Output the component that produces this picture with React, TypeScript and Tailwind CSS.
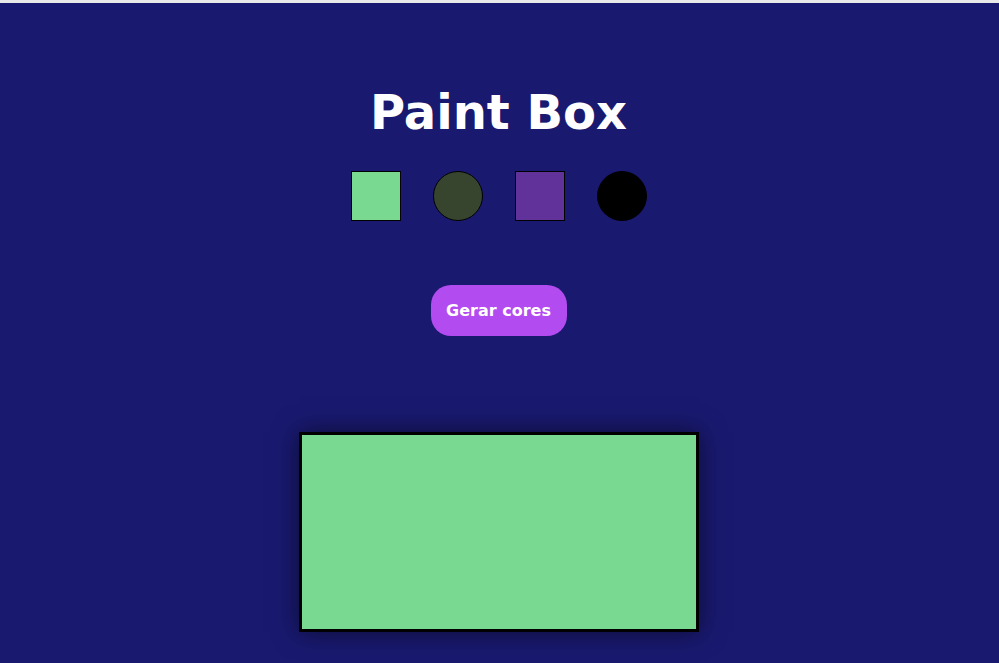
export default function App() {
  return (
    <div className="w-[999px] h-[663px] overflow-hidden flex flex-col bg-[#191970]" style={{ fontFamily: '"DejaVu Sans", sans-serif' }}>
      <div className="h-[3px] bg-[#e8e8e8] shrink-0" />
      <div className="flex-1 w-[997px] flex flex-col items-center">
        <h1 className="mt-[81px] text-[48px] leading-[56px] font-bold text-white">Paint Box</h1>
        <div className="mt-[31px] flex gap-[32px]">
          <div className="w-[50px] h-[50px] border border-black bg-[#7ad991]" />
          <div className="w-[50px] h-[50px] border border-black rounded-full bg-[#37452f]" />
          <div className="w-[50px] h-[50px] border border-black bg-[#61339a]" />
          <div className="w-[50px] h-[50px] border border-black rounded-full bg-black" />
        </div>
        <button className="mt-[64px] w-[136px] py-[16px] rounded-[20px] bg-[#b24bf0] text-white text-[16px] leading-[19px] font-bold text-center">
          Gerar cores
        </button>
        <div className="mt-[96px] w-[400px] h-[200px] border-[3px] border-black bg-[#7ad991] shadow-[0_0_24px_rgba(0,0,0,0.55)]" />
      </div>
    </div>
  );
}
